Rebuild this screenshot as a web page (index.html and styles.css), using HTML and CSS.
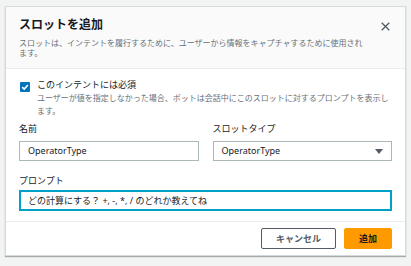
FILE: index.html
```html
<!DOCTYPE html>
<html lang="ja">
<head>
<meta charset="UTF-8">
<meta name="viewport" content="width=device-width, initial-scale=1.0">
<title>スロットを追加</title>
<link rel="stylesheet" href="styles.css">
</head>
<body>
<div class="modal">
  <div class="modal-header">
    <div class="header-text">
      <h1 class="title">スロットを追加</h1>
      <p class="subtitle">スロットは、インテントを履行するために、ユーザーから情報をキャプチャするために使用されます。</p>
    </div>
    <svg class="close" width="9" height="9" viewBox="0 0 9 9">
      <path d="M0.7 0.7 L8.3 8.3 M8.3 0.7 L0.7 8.3" stroke="#545b64" stroke-width="1.3" fill="none"/>
    </svg>
  </div>

  <div class="modal-body">
    <div class="check-row">
      <span class="checkbox">
        <svg width="10" height="10" viewBox="0 0 10 10">
          <path d="M2.2 5.2 L4.2 7.1 L7.9 3" stroke="#fff" stroke-width="1.6" fill="none"/>
        </svg>
      </span>
      <div>
        <div class="check-label">このインテントには必須</div>
        <div class="check-desc">ユーザーが値を指定しなかった場合、ボットは会話中にこのスロットに対するプロンプトを表示します。</div>
      </div>
    </div>

    <div class="fields">
      <div class="field">
        <label class="label">名前</label>
        <div class="input">OperatorType</div>
      </div>
      <div class="field">
        <label class="label">スロットタイプ</label>
        <div class="input select">
          <span>OperatorType</span>
          <svg width="8" height="5" viewBox="0 0 8 5"><path d="M0 0 L8 0 L4 5 Z" fill="#545b64"/></svg>
        </div>
      </div>
    </div>

    <div class="field prompt">
      <label class="label">プロンプト</label>
      <div class="input focus">どの計算にする？ +, -, *, / のどれか教えてね</div>
    </div>
  </div>

  <div class="modal-footer">
    <button class="btn btn-cancel">キャンセル</button>
    <button class="btn btn-primary">追加</button>
  </div>
</div>
</body>
</html>
```

FILE: styles.css
```css
body {
  margin: 0;
  padding: 6px 5px;
  background-color: #f2f3f3;
  font-family: "Noto Sans", "Noto Sans CJK JP", sans-serif;
  color: #16191f;
}

.modal {
  background-color: #fff;
  border: 1px solid #d5dbdb;
  box-shadow: 0 1px 1px rgba(0, 0, 0, 0.3);
}

.modal-header {
  display: flex;
  justify-content: space-between;
  background-color: #fafafa;
  border-bottom: 1px solid #eaeded;
  padding: 10px 15px 10px 13px;
}

.title {
  margin: 0;
  font-size: 12px;
  line-height: 16px;
  font-weight: bold;
}

.subtitle {
  margin: 5px 0 0;
  font-size: 8px;
  line-height: 10px;
  color: #687078;
  max-width: 350px;
}

.close {
  margin-top: 5px;
  flex-shrink: 0;
}

.modal-body {
  padding: 9px 13px 10px;
}

.check-row {
  display: flex;
  gap: 7px;
}

.checkbox {
  width: 10px;
  height: 10px;
  margin-top: 4px;
  margin-left: 1px;
  background-color: #0073bb;
  border-radius: 1px;
  flex-shrink: 0;
  display: flex;
}

.check-label {
  font-size: 9px;
  line-height: 13px;
}

.check-desc {
  font-size: 8px;
  line-height: 13px;
  color: #687078;
  max-width: 355px;
}

.fields {
  display: grid;
  grid-template-columns: 1fr 1fr;
  gap: 14px;
  margin-top: 5px;
}

.label {
  display: block;
  font-size: 9px;
  line-height: 13px;
  margin-bottom: 6px;
}

.input {
  height: 20px;
  box-sizing: border-box;
  border: 1px solid #aab7b8;
  padding: 0 8px;
  font-size: 9px;
  line-height: 18px;
  background-color: #fff;
}

.select {
  display: flex;
  justify-content: space-between;
  align-items: center;
}

.prompt {
  margin-top: 13px;
}

.prompt .label {
  margin-bottom: 3px;
}

.focus {
  height: 21px;
  border: 2px solid #00a1c9;
  padding: 0 7px;
  line-height: 17px;
}

.modal-footer {
  display: flex;
  justify-content: flex-end;
  gap: 8px;
  padding: 6px 13px 6px;
  border-top: 1px solid #eaeded;
}

.btn {
  height: 21px;
  box-sizing: border-box;
  font-family: inherit;
  font-size: 9px;
  font-weight: bold;
  padding: 0;
  border-radius: 2px;
}

.btn-cancel {
  width: 75px;
  background-color: #fff;
  border: 1px solid #545b64;
  color: #545b64;
}

.btn-primary {
  width: 48px;
  background-color: #ff9900;
  border: 1px solid #ff9900;
  color: #16191f;
}
```
